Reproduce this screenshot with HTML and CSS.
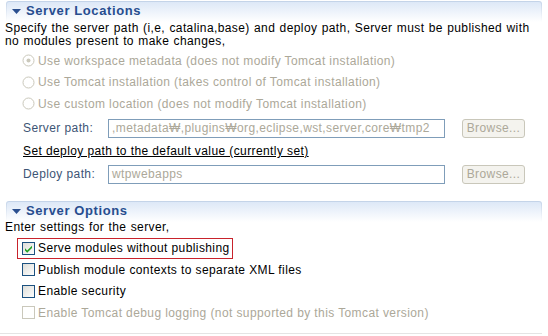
FILE: index.html
```html
<!DOCTYPE html>
<html>
<head>
<meta charset="utf-8">
<link rel="stylesheet" href="styles.css">
</head>
<body>
<div class="page">
  <div class="sec-head">
    <div class="sec-head-in">
      <svg class="twisty" width="9" height="5" viewBox="0 0 9 5"><path d="M0 0H9L4.5 5Z" fill="#2b4f8f"/></svg>
      <span class="sec-title">Server Locations</span>
    </div>
  </div>
  <p class="desc">Specify the server path (i,e, catalina,base) and deploy path, Server must be published with<br>no modules present to make changes,</p>
  <div class="radios">
    <div class="radio-row">
      <svg class="radio" width="13" height="13" viewBox="0 0 13 13"><circle cx="6.5" cy="6.5" r="5.5" fill="#fff" stroke="#cac8bb"/><circle cx="6.5" cy="6.5" r="2" fill="#cac8bb"/></svg>
      <span>Use workspace metadata (does not modify Tomcat installation)</span>
    </div>
    <div class="radio-row">
      <svg class="radio" width="13" height="13" viewBox="0 0 13 13"><circle cx="6.5" cy="6.5" r="5.5" fill="#fff" stroke="#cac8bb"/></svg>
      <span>Use Tomcat installation (takes control of Tomcat installation)</span>
    </div>
    <div class="radio-row">
      <svg class="radio" width="13" height="13" viewBox="0 0 13 13"><circle cx="6.5" cy="6.5" r="5.5" fill="#fff" stroke="#cac8bb"/></svg>
      <span>Use custom location (does not modify Tomcat installation)</span>
    </div>
  </div>
  <div class="field-row">
    <span class="label">Server path:</span>
    <div class="input">,metadata₩,plugins₩org,eclipse,wst,server,core₩tmp2</div>
    <div class="btn">Browse...</div>
  </div>
  <div class="link-row"><span class="link">Set deploy path to the default value (currently set)</span></div>
  <div class="field-row">
    <span class="label">Deploy path:</span>
    <div class="input">wtpwebapps</div>
    <div class="btn">Browse...</div>
  </div>

  <div class="sec-head sec-head-2">
    <div class="sec-head-in">
      <svg class="twisty" width="9" height="5" viewBox="0 0 9 5"><path d="M0 0H9L4.5 5Z" fill="#2b4f8f"/></svg>
      <span class="sec-title">Server Options</span>
    </div>
  </div>
  <p class="desc desc-2">Enter settings for the server,</p>
  <div class="checks">
    <div class="check-row highlight">
      <svg class="cb" width="13" height="13" viewBox="0 0 13 13"><defs><linearGradient id="g1" x1="0" y1="0" x2="1" y2="1"><stop offset="0" stop-color="#dcdcd7"/><stop offset="1" stop-color="#fff"/></linearGradient></defs><rect x="0.5" y="0.5" width="12" height="12" fill="url(#g1)" stroke="#1c5180"/><path d="M3 6.2L5.2 8.5L10 3.7V5.9L5.2 10.7L3 8.4Z" fill="#21a121"/></svg>
      <span>Serve modules without publishing</span>
    </div>
    <div class="check-row">
      <svg class="cb" width="13" height="13" viewBox="0 0 13 13"><rect x="0.5" y="0.5" width="12" height="12" fill="url(#g1)" stroke="#1c5180"/></svg>
      <span>Publish module contexts to separate XML files</span>
    </div>
    <div class="check-row">
      <svg class="cb" width="13" height="13" viewBox="0 0 13 13"><rect x="0.5" y="0.5" width="12" height="12" fill="url(#g1)" stroke="#1c5180"/></svg>
      <span>Enable security</span>
    </div>
    <div class="check-row disabled">
      <svg class="cb" width="13" height="13" viewBox="0 0 13 13"><rect x="0.5" y="0.5" width="12" height="12" fill="#fff" stroke="#cac8bb"/></svg>
      <span>Enable Tomcat debug logging (not supported by this Tomcat version)</span>
    </div>
  </div>
  <div class="bottom-line"></div>
</div>
</body>
</html>
```
FILE: styles.css
```css
html, body {
  margin: 0;
  padding: 0;
  background: #fff;
}
.page {
  width: 548px;
  height: 336px;
  overflow: hidden;
  font-family: "Liberation Sans", Arial, sans-serif;
  font-size: 12px;
  letter-spacing: 0.4px;
  color: #000;
  padding-top: 1px;
  box-sizing: border-box;
}
.sec-head {
  margin: 0 6px 0 6px;
  padding: 1px 1px 0 1px;
  height: 20px;
  background: linear-gradient(#c3d3e8, #ffffff);
  border-radius: 3px 3px 0 0;
}
.sec-head-in {
  height: 20px;
  box-sizing: border-box;
  padding-bottom: 2px;
  background: linear-gradient(#dde8f7, #ffffff);
  border-radius: 2px 2px 0 0;
  display: flex;
  align-items: center;
  padding-left: 5px;
}
.twisty {
  margin-right: 5px;
  margin-top: 1px;
}
.sec-title {
  font-weight: bold;
  font-size: 13px;
  letter-spacing: 0.6px;
  color: #274d8f;
  line-height: 16px;
}
.desc {
  margin: 0 0 0 5px;
  line-height: 13px;
  word-spacing: 0.6px;
}
.radios {
  margin-top: 2px;
  padding-left: 22px;
  color: #aca899;
}
.radio-row {
  height: 21.5px;
  display: flex;
  align-items: center;
}
.radio {
  margin-right: 3px;
  flex: none;
}
.field-row {
  display: flex;
  align-items: center;
  padding-left: 23px;
  height: 21px;
}
.radios + .field-row {
  margin-top: 3px;
}
.label {
  width: 85px;
  flex: none;
  color: #3d5575;
}
.input {
  width: 337px;
  height: 19px;
  box-sizing: border-box;
  border: 1px solid #7f9db9;
  color: #aca899;
  padding-left: 3px;
  line-height: 17px;
  white-space: nowrap;
  overflow: hidden;
  flex: none;
}
.btn {
  margin-left: 17px;
  width: 63px;
  height: 19px;
  box-sizing: border-box;
  border: 1px solid #c9c7ba;
  border-radius: 3px;
  background: #f4f3ee;
  color: #aca899;
  line-height: 17px;
  text-align: center;
  flex: none;
}
.link-row {
  padding-left: 23px;
  height: 25px;
  display: flex;
  align-items: center;
}
.link {
  text-decoration: underline;
  color: #000;
}
.sec-head-2 {
  margin-top: 16px;
}
.desc-2 {
  margin-top: -1px;
}
.checks {
  margin-top: 4px;
  padding-left: 17px;
}
.check-row {
  height: 21.5px;
  display: flex;
  align-items: center;
  padding-left: 5px;
  box-sizing: border-box;
}
.check-row.highlight {
  width: 216px;
  border: 1px solid #c8232c;
  padding-left: 4px;
}
.check-row.disabled {
  color: #aca899;
}
.cb {
  margin-right: 3px;
  flex: none;
}
.bottom-line {
  margin-top: 9px;
  height: 1px;
  background: #e4e4e4;
  width: 542px;
}
```
